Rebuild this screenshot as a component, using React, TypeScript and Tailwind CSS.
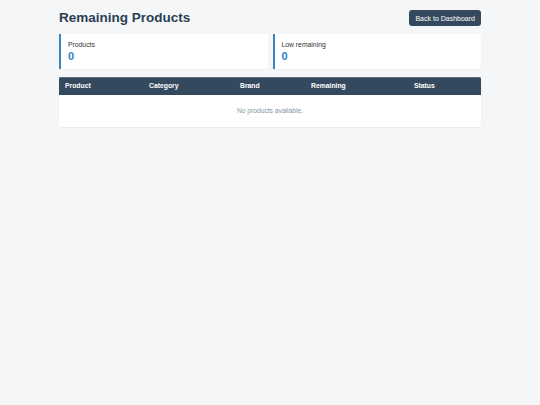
export default function App() {
  const columns = ["Product", "Category", "Brand", "Remaining", "Status"];

  return (
    <div className="min-h-screen bg-[#f4f6f8] font-['Liberation_Sans',Arial,sans-serif] text-[#2c3e50]">
      <div className="mx-auto w-[422px] pt-[10px]">
        {/* header */}
        <div className="flex items-center justify-between h-4">
          <h1 className="text-[13.5px] font-bold leading-none text-[#2c3e50]">Remaining Products</h1>
          <button className="h-4 px-[6px] rounded-[3px] bg-[#34495e] text-white text-[7px] leading-none">
            Back to Dashboard
          </button>
        </div>

        {/* summary cards */}
        <div className="grid grid-cols-2 gap-[5px] mt-2">
          <StatCard label="Products" value={0} />
          <StatCard label="Low remaining" value={0} />
        </div>

        {/* table */}
        <div className="mt-2 bg-white rounded-[2px] shadow-[0_1px_2px_rgba(0,0,0,0.06)] overflow-hidden">
          <div className="grid grid-cols-[84px_91px_71px_103px_73px] h-[18px] items-center bg-[#34495e] border-t border-[#5d6d7e]">
            {columns.map((c) => (
              <div key={c} className="px-[6px] text-[6.8px] font-bold text-white leading-none">
                {c}
              </div>
            ))}
          </div>
          <div className="h-8 flex items-center justify-center text-[6.7px] text-[#8796a3]">
            No products available.
          </div>
        </div>
      </div>
    </div>
  );
}

function StatCard({ label, value }: { label: string; value: number }) {
  return (
    <div className="h-[35px] bg-white border-l-2 border-[#3a84c1] rounded-r-[2px] pl-[7px] pt-[8px] shadow-[0_1px_2px_rgba(0,0,0,0.04)]">
      <div className="text-[6.8px] leading-none text-[#333]">{label}</div>
      <div className="mt-[2px] text-[11px] font-bold leading-none text-[#2f80c2]">{value}</div>
    </div>
  );
}
